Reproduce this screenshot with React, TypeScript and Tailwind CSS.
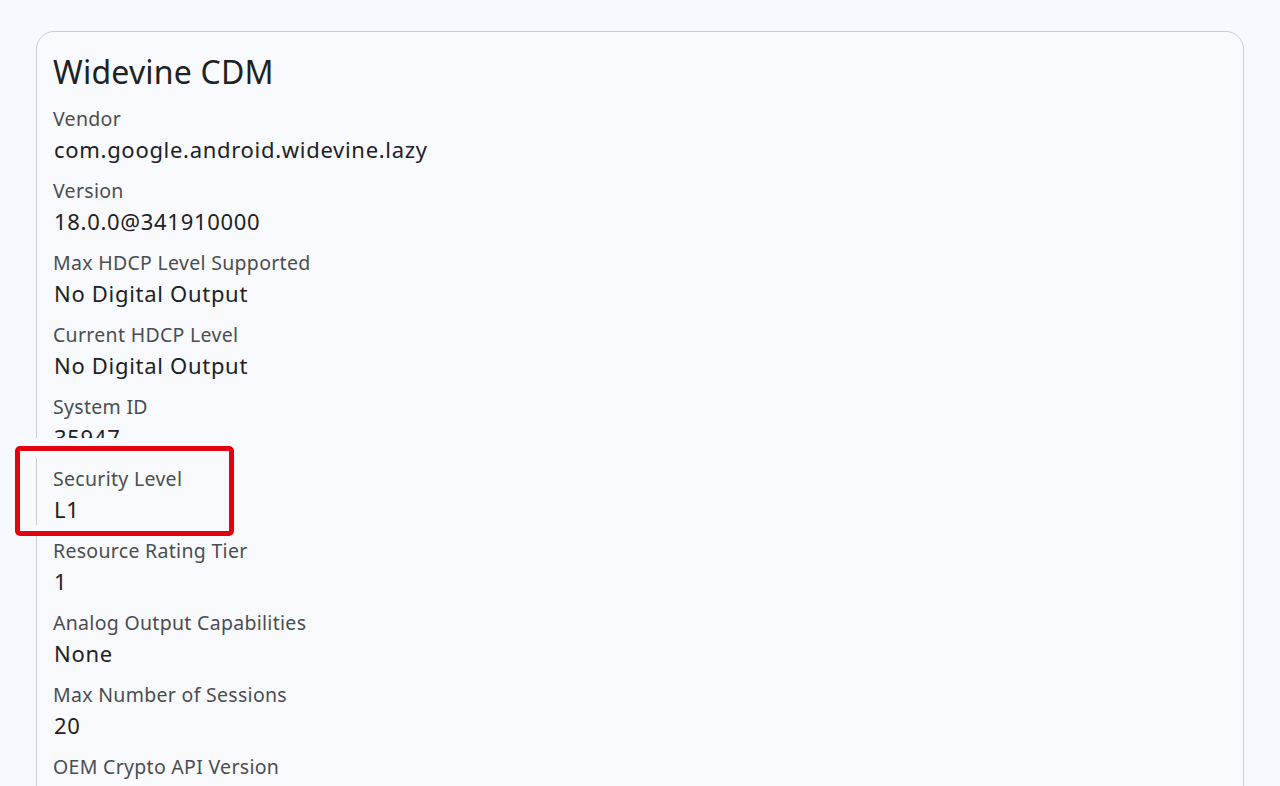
const ROWS: { label: string; value: string }[] = [
  { label: 'Vendor', value: 'com.google.android.widevine.lazy' },
  { label: 'Version', value: '18.0.0@341910000' },
  { label: 'Max HDCP Level Supported', value: 'No Digital Output' },
  { label: 'Current HDCP Level', value: 'No Digital Output' },
  { label: 'System ID', value: '35947' },
  { label: 'Security Level', value: 'L1' },
  { label: 'Resource Rating Tier', value: '1' },
  { label: 'Analog Output Capabilities', value: 'None' },
  { label: 'Max Number of Sessions', value: '20' },
  { label: 'OEM Crypto API Version', value: '18' },
];

function InfoRow({ label, value }: { label: string; value: string }) {
  return (
    <div className="flex flex-col">
      <span className="text-[19.5px] leading-[28px] tracking-[0.3px] text-[#4b4d50]">{label}</span>
      <span className="text-[22px] leading-[32px] tracking-[0.7px] text-[#202124] pl-[1px]">{value}</span>
    </div>
  );
}

export default function App() {
  return (
    <div
      className="w-[1280px] h-[786px] overflow-hidden bg-[#f6f9fd]"
      style={{ fontFamily: '"Noto Sans", "Open Sans", sans-serif' }}
    >
      <div className="pt-[31px] px-[36px]">
        <div className="rounded-[18px] border border-[#c9ccd1] bg-[#f8fafd] px-[16px] pt-[22px] pb-8">
          <h1 className="text-[32px] leading-[36px] tracking-[0.2px] text-[#202124]">Widevine CDM</h1>
          <div className="mt-[15px] flex flex-col gap-[12px]">
            {ROWS.map((r) => (
              <div key={r.label} className="relative">
                <InfoRow label={r.label} value={r.value} />
                {r.label === 'Security Level' && (
                  <div className="absolute left-[-38px] top-[-27px] w-[219px] pt-[8px] bg-[#f8fafd]">
                    <div className="relative h-[90px] rounded-[5px] border-[5px] border-[#e3000f] bg-[#f8fafd]">
                      <div className="absolute left-[16px] top-[7px] bottom-[6px] w-px bg-[#c9ccd1]" />
                      <div className="pl-[33px] pt-[14px]">
                        <InfoRow label={r.label} value={r.value} />
                      </div>
                    </div>
                  </div>
                )}
              </div>
            ))}
          </div>
        </div>
      </div>
    </div>
  );
}
